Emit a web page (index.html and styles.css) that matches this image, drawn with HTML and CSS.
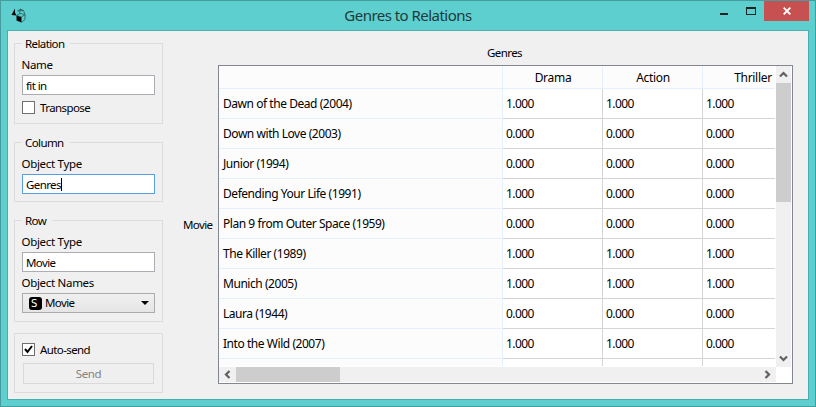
FILE: index.html
```html
<!DOCTYPE html>
<html lang="en">
<head>
<meta charset="utf-8">
<title>Genres to Relations</title>
<link rel="stylesheet" href="styles.css">
</head>
<body>
<div class="window">
  <header class="titlebar">
    <svg class="app-icon" width="16" height="16" viewBox="0 0 16 16">
      <path d="M4 1.500 .5 8l5 .5L4 5.500zM5.500 8.500l5 1.500v5.500l-5-2z" fill="#000"/>
      <path d="M5.500 8.500l3.500-2 5 1-3.500 2.500zM14 7.500v5l-3.500 3M6.500 4l3-2 3 1.500 1.500 4M9.500 2L8.500 6.500M6.500 4l6-.5" fill="none" stroke="#285c5c" stroke-width=".8"/>
    </svg>
    <h1>Genres to Relations</h1>
    <div class="controls">
      <span class="min"></span>
      <span class="max"></span>
      <span class="close"><svg width="8" height="8" viewBox="0 0 8 8"><path d="M.7.7l6.600 6.600M7.300.7L.7 7.300" stroke="#fff" stroke-width="1.900"/></svg></span>
    </div>
  </header>
  <main class="client">
    <aside>
      <section class="group relation">
        <h2>Relation</h2>
        <label>Name</label>
        <div class="field">fit in</div>
        <div class="check"><span class="box"></span><span>Transpose</span></div>
      </section>
      <section class="group column">
        <h2>Column</h2>
        <label>Object Type</label>
        <div class="field focus">Genres<i class="caret"></i></div>
      </section>
      <section class="group row">
        <h2>Row</h2>
        <label>Object Type</label>
        <div class="field">Movie</div>
        <label>Object Names</label>
        <div class="select"><span class="badge">S</span><span>Movie</span><svg width="8" height="4" viewBox="0 0 8 4"><path d="M0 0h8L4 4z"/></svg></div>
      </section>
      <section class="group send">
        <div class="check"><span class="box"><svg width="11" height="11" viewBox="0 0 11 11"><path d="M2 5l2.500 3L9 2" fill="none" stroke="#000" stroke-width="2"/></svg></span><span>Auto-send</span></div>
        <div class="button">Send</div>
      </section>
    </aside>
    <div class="row-title">Movie</div>
    <div class="matrix">
      <div class="col-title">Genres</div>
      <div class="frame">
        <div class="viewport">
          <div class="grid">
            <b></b><b>Drama</b><b>Action</b><b>Thriller</b>
            <em>Dawn of the Dead (2004)</em><span>1.000</span><span>1.000</span><span>1.000</span>
            <em>Down with Love (2003)</em><span>0.000</span><span>0.000</span><span>0.000</span>
            <em>Junior (1994)</em><span>0.000</span><span>0.000</span><span>0.000</span>
            <em>Defending Your Life (1991)</em><span>1.000</span><span>0.000</span><span>0.000</span>
            <em>Plan 9 from Outer Space (1959)</em><span>0.000</span><span>0.000</span><span>0.000</span>
            <em>The Killer (1989)</em><span>1.000</span><span>1.000</span><span>1.000</span>
            <em>Munich (2005)</em><span>1.000</span><span>1.000</span><span>1.000</span>
            <em>Laura (1944)</em><span>0.000</span><span>0.000</span><span>0.000</span>
            <em>Into the Wild (2007)</em><span>1.000</span><span>1.000</span><span>0.000</span>
            <em></em><span></span><span></span><span></span>
          </div>
        </div>
        <div class="vbar">
          <svg width="15" height="17" viewBox="0 0 15 17"><path d="M4 10.500L7.500 7l3.500 3.500" /></svg>
          <div class="thumb"></div>
          <svg width="15" height="17" viewBox="0 0 15 17"><path d="M4 6.500L7.500 10 11 6.500" /></svg>
        </div>
        <div class="hbar">
          <svg width="17" height="15" viewBox="0 0 17 15"><path d="M10.500 4L7 7.500l3.500 3.500" /></svg>
          <div class="thumb"></div>
          <svg width="17" height="15" viewBox="0 0 17 15"><path d="M6.500 4L10 7.500 6.500 11" /></svg>
        </div>
      </div>
    </div>
  </main>
</div>
</body>
</html>
```
FILE: styles.css
```css
* { box-sizing: border-box; }
body { margin: 0; font: 12px/16px "Noto Sans", "Open Sans", sans-serif; color: #000; overflow: hidden; }
svg { display: block; flex: none; }
.window {
  width: 816px; height: 407px; padding: 0 6px 6px;
  border: 1px solid #469c9c; background: #5dcfcf;
}
.titlebar { height: 29px; display: flex; position: relative; padding-left: 4px; }
.app-icon { margin-top: 6px; }
h1 {
  position: absolute; left: 0; right: 0; top: 3px; margin: 0; text-align: center;
  font-size: 15px; line-height: 22px; font-weight: 400; letter-spacing: -.53px; color: #223a3a;
}
.controls { margin-left: auto; display: flex; }
.min { width: 8px; height: 2px; margin: 12px 18px 0 0; background: #222; }
.max { width: 10px; height: 8px; margin: 6px 8px 0 0; border: 1px solid #222; border-top-width: 2px; }
.close { width: 45px; height: 20px; background: #c75050; display: flex; align-items: center; justify-content: center; }
.client {
  height: 370px; border: 1px solid #48aeae; background: #f0f0f0;
  display: flex; padding: 12px 15px 0 6px;
}
aside, .row-title, .col-title { font-size: 11.500px; line-height: 14px; letter-spacing: -.6px; }
aside { width: 149px; }
.group { border: 1px solid #dcdcdc; padding: 0 7px; }
.relation { height: 81px; margin-bottom: 18px; }
.column { height: 60px; margin-bottom: 18px; }
.row { height: 102px; margin-bottom: 11px; }
.send { height: 60px; padding-top: 9px; }
h2 {
  width: max-content; margin: -7px 0 7px; padding: 0 6px 0 3px;
  font: inherit; background: #f0f0f0;
}
label { display: block; height: 17px; margin-left: -.5px; letter-spacing: -.3px; }
.field {
  height: 20px; padding: 3px 3px 1px; border: 1px solid #abadb3; background: #fff; display: flex;
}
.focus { border-color: #569de5; }
.caret { width: 1px; height: 13px; background: #000; }
.field + label { margin-top: 4px; }
.check { display: flex; align-items: center; gap: 5px; height: 13px; }
.field + .check { margin-top: 6px; }
.box { width: 13px; height: 13px; border: 1px solid #707070; background: #fff; }
.select {
  height: 20px; border: 1px solid #acacac; background: linear-gradient(#f0f0f0, #e5e5e5);
  display: flex; align-items: center; padding: 0 5px 0 6px; gap: 3px;
}
.select svg { margin-left: auto; }
.badge {
  width: 13px; height: 13px; border-radius: 3px; background: #000; color: #fff;
  font: 10px/13px "DejaVu Sans", sans-serif; padding-left: 2px;
}
.button {
  height: 21px; margin: 7px 1px 0; border: 1px solid #d9d9d9; background: #efefef;
  color: #838383; text-align: center; line-height: 20px; letter-spacing: -.4px;
}
.row-title { width: 55px; padding: 175px 0 0 20px; }
.matrix { flex: 1; }
.col-title { height: 22px; padding-top: 3px; margin-left: -1px; text-align: center; width: 575px; }
.frame {
  width: 575px; height: 319px; border: 1px solid #828790; background: #fff;
  display: grid; grid-template: 301px 15px / 557px 15px;
}
.viewport { overflow: hidden; border-right: 1px solid #fff; border-bottom: 1px solid #fff; }
.grid { width: 584px; display: grid; grid-template-columns: 284px repeat(3, 100px); grid-template-rows: 23px; grid-auto-rows: 30px; letter-spacing: -.45px; }
.grid b { font-weight: 400; text-align: center; line-height: 24px; letter-spacing: -.3px; padding-left: 1px; background: #fcfcfc; border: solid #e5effd; border-width: 0 1px 1px 0; }
.grid em { font-style: normal; padding-left: 4px; line-height: 30px; background: #fcfcfc; border: solid #e5effd; border-width: 0 1px 1px 0; }
.grid span { padding-left: 3px; line-height: 30px; letter-spacing: -.6px; border: solid #d4d4d4; border-width: 0 1px 1px 0; }
.vbar, .hbar { background: #f0f0f0; display: flex; }
.vbar { flex-direction: column; justify-content: space-between; }
.hbar { justify-content: space-between; }
.vbar path, .hbar path { fill: none; stroke: #606060; stroke-width: 2.200; }
.vbar .thumb { height: 119px; background: #cdcdcd; margin-bottom: auto; }
.hbar .thumb { width: 104px; background: #cdcdcd; margin-right: auto; }
```
